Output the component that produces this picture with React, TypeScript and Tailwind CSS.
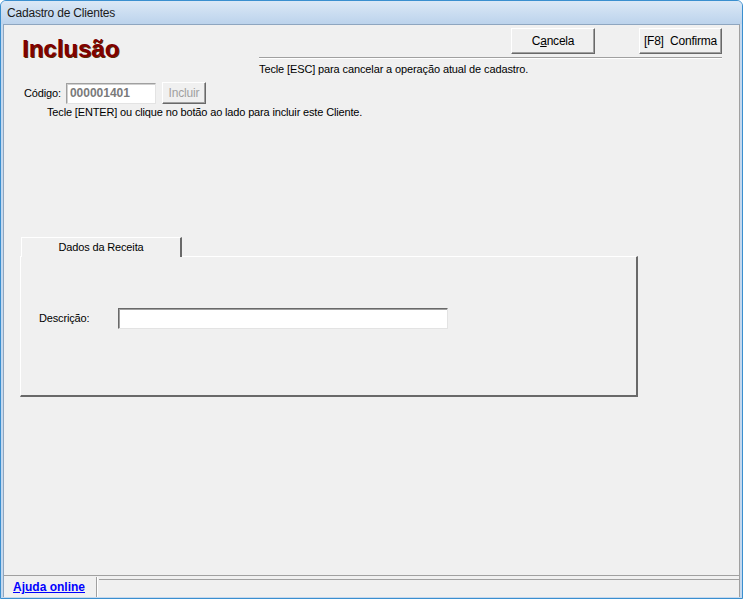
import React from "react";

const ui = { fontFamily: '"Liberation Sans", Arial, sans-serif' };

function RaisedButton({
  children,
  className = "",
  disabled = false,
}: {
  children: React.ReactNode;
  className?: string;
  disabled?: boolean;
}) {
  return (
    <div
      className={
        "flex items-center justify-center bg-[#f0f0f0] border border-t-white border-l-white border-r-[#696969] border-b-[#696969] shadow-[inset_-1px_-1px_0_#a0a0a0] text-[12px] tracking-[-0.2px] " +
        (disabled ? "text-[#a0a0a0] " : "text-black ") +
        className
      }
    >
      {children}
    </div>
  );
}

export default function App() {
  return (
    <div
      className="w-[743px] h-[599px] flex flex-col bg-[#c4d8ee] border border-[#3a8fcf] rounded-t-[6px] overflow-hidden"
      style={ui}
    >
      {/* Title bar */}
      <div className="h-[23px] flex items-center pl-[6px] bg-gradient-to-b from-[#dbe8f6] to-[#bcd3ec] text-[12px] tracking-[-0.2px] text-[#1a1a1a]">
        Cadastro de Clientes
      </div>

      {/* Client area */}
      <div className="flex-1 flex flex-col mx-[2px] mb-[1px] bg-[#f0f0f0] border-t border-l border-t-[#8ea6c0] border-l-[#8ea6c0] border-r border-r-[#a0a0a0]">
        <div className="flex-1 flex flex-col border-b border-[#a0a0a0]">
          {/* Header */}
          <div className="flex pt-[3px]">
            <div className="pl-[18px] pt-[7px]">
              <div className="text-[24px] font-bold leading-[28px] text-[#800000] [text-shadow:1px_1px_0_#5a2a00]">
                Inclusão
              </div>
            </div>
            <div className="ml-auto mr-[17px] w-[463px] flex flex-col">
              <div className="flex justify-end gap-[44px]">
                <RaisedButton className="w-[84px] h-[26px]">
                  <span>
                    C<span className="underline">a</span>ncela
                  </span>
                </RaisedButton>
                <RaisedButton className="w-[83px] h-[26px]">
                  <span>[F8]&nbsp;&nbsp;Confirma</span>
                </RaisedButton>
              </div>
              <div className="mt-[3px] h-[2px] border-t border-b border-t-[#a0a0a0] border-b-white" />
              <div className="mt-[4px] text-[11px] leading-[13px] tracking-[-0.12px] text-black">
                Tecle [ESC] para cancelar a operação atual de cadastro.
              </div>
            </div>
          </div>

          {/* Código row */}
          <div className="flex items-center mt-[6px] pl-[20px]">
            <span className="text-[11px] tracking-[-0.15px] text-black">Código:</span>
            <div className="ml-[5px] w-[90px] h-[21px] bg-white border border-t-[#a0a0a0] border-l-[#a0a0a0] border-r-[#e3e3e3] border-b-[#e3e3e3] shadow-[inset_1px_1px_0_#d0d0d0] flex items-center pl-[3px] text-[12px] font-bold text-[#7a7a7a]">
              000001401
            </div>
            <RaisedButton disabled className="ml-[6px] w-[44px] h-[22px] text-[11px]">
              Incluir
            </RaisedButton>
          </div>
          <div className="pl-[43px] mt-[2px] text-[11px] leading-[13px] tracking-[-0.15px] text-black">
            Tecle [ENTER] ou clique no botão ao lado para incluir este Cliente.
          </div>

          {/* Tab control */}
          <div className="mt-[118px] ml-[16px] w-[618px] flex flex-col">
            <div className="flex">
              <div className="ml-[1px] w-[161px] h-[20px] border-t border-l border-white border-r-2 border-r-[#696969] flex items-center justify-center text-[11px] tracking-[-0.15px] text-black relative z-10 bg-[#f0f0f0] -mb-px">
                Dados da Receita
              </div>
            </div>
            <div className="h-[141px] border-t border-l border-white border-r-2 border-b-2 border-r-[#696969] border-b-[#696969] flex flex-col">
              <div className="flex items-center mt-[51px] pl-[18px]">
                <span className="w-[79px] text-[11px] tracking-[-0.15px] text-black">Descrição:</span>
                <div className="w-[330px] h-[21px] bg-white border border-t-[#696969] border-l-[#696969] border-r-[#e3e3e3] border-b-[#e3e3e3] shadow-[inset_1px_1px_0_#a0a0a0]" />
              </div>
            </div>
          </div>
        </div>

        {/* Status bar */}
        <div className="h-[20px] flex mt-[1px]">
          <div className="w-[93px] flex items-center pl-[9px] border-r border-[#a0a0a0] shadow-[1px_0_0_white]">
            <span className="text-[12px] font-bold text-[#0000ff] underline">Ajuda online</span>
          </div>
          <div className="flex-1 ml-[2px] border-t border-[#a0a0a0] mt-[2px]" />
        </div>
      </div>
    </div>
  );
}
